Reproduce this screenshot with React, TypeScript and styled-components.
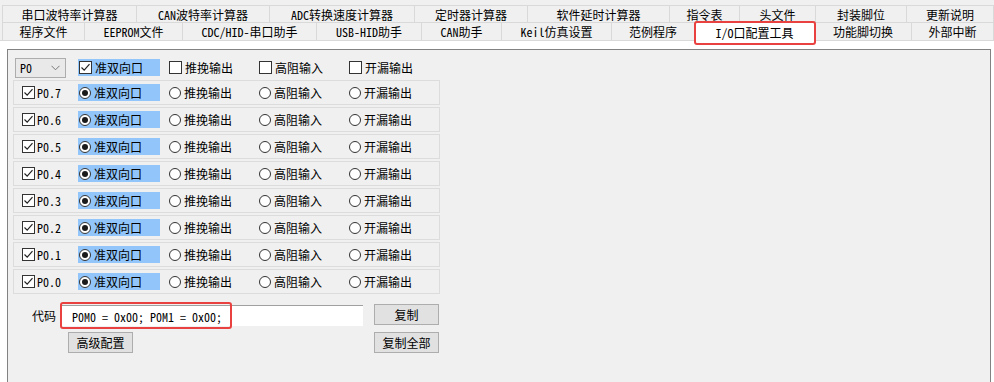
import React from 'react';
import styled, { createGlobalStyle } from 'styled-components';

const FONT = `"Noto Sans Mono CJK SC", "Noto Sans CJK SC", "Liberation Mono", monospace`;

const GlobalStyle = createGlobalStyle`
  html, body {
    margin: 0;
    padding: 0;
    background: #f0f0f0;
  }
  body {
    font-family: ${FONT};
    font-size: 12px;
    color: #000;
  }
`;

interface Tab {
  label: string;
  width: number;
  selected?: boolean;
}

const topTabs: Tab[] = [
  { label: '串口波特率计算器', width: 135 },
  { label: 'CAN波特率计算器', width: 133 },
  { label: 'ADC转换速度计算器', width: 145 },
  { label: '定时器计算器', width: 113 },
  { label: '软件延时计算器', width: 142 },
  { label: '指令表', width: 70 },
  { label: '头文件', width: 76 },
  { label: '封装脚位', width: 91 },
  { label: '更新说明', width: 87 },
];

const bottomTabs: Tab[] = [
  { label: '程序文件', width: 83 },
  { label: 'EEPROM文件', width: 98 },
  { label: 'CDC/HID-串口助手', width: 134 },
  { label: 'USB-HID助手', width: 105 },
  { label: 'CAN助手', width: 80 },
  { label: 'Keil仿真设置', width: 110 },
  { label: '范例程序', width: 83 },
  { label: 'I/O口配置工具', width: 120, selected: true },
  { label: '功能脚切换', width: 97 },
  { label: '外部中断', width: 82 },
];

const modes = ['准双向口', '推挽输出', '高阻输入', '开漏输出'];
const pins = ['P0.7', 'P0.6', 'P0.5', 'P0.4', 'P0.3', 'P0.2', 'P0.1', 'P0.0'];

const Window = styled.div`
  width: 994px;
  height: 382px;
  display: flex;
  flex-direction: column;
  overflow: hidden;
`;

const TabStrip = styled.div`
  padding: 5px 0 0 2px;
  display: flex;
  flex-direction: column;
`;

const TabRow = styled.div<{ $h: number }>`
  display: flex;
  height: ${p => p.$h}px;
`;

const TabItem = styled.div<{ $w: number; $selected?: boolean }>`
  position: relative;
  box-sizing: border-box;
  width: ${p => p.$w}px;
  display: flex;
  align-items: center;
  justify-content: center;
  white-space: nowrap;
  border-top: 1px solid #d9d9d9;
  border-right: 1px solid #d9d9d9;
  background: ${p => (p.$selected ? '#ffffff' : '#f0f0f0')};
  ${p =>
    p.$selected &&
    `
    margin-top: -1px;
    margin-bottom: -2px;
    z-index: 2;
    border-top-color: #d0d0d0;
  `}
  &:first-child {
    border-left: 1px solid #d9d9d9;
  }
`;

const Marker = styled.div<{ $l: number; $t: number; $w: number; $h: number }>`
  position: absolute;
  left: ${p => p.$l}px;
  top: ${p => p.$t}px;
  width: ${p => p.$w}px;
  height: ${p => p.$h}px;
  box-sizing: border-box;
  border: 2px solid #e8413f;
  border-radius: 3px;
  pointer-events: none;
  z-index: 3;
`;

const TabPage = styled.div`
  flex: 1;
  display: flex;
  background: #ffffff;
  padding: 8px 3px 0 7px;
  border-top: 1px solid #d9d9d9;
`;

const Panel = styled.div`
  flex: 1;
  background: #f0f0f0;
  border: 1px solid #828282;
  border-bottom: none;
  display: flex;
  flex-direction: column;
`;

const TopRow = styled.div`
  display: flex;
  align-items: center;
  height: 21px;
  margin: 7px 0 0 7px;
`;

const Select = styled.div`
  box-sizing: border-box;
  width: 51px;
  height: 20px;
  border: 1px solid #adadad;
  background: #e9e9e9;
  display: flex;
  align-items: center;
  justify-content: space-between;
  padding: 0 5px 0 4px;
  margin-right: 12px;
  font-weight: 300;
`;

const PinBox = styled.div`
  box-sizing: border-box;
  width: 427px;
  height: 25px;
  margin: 2px 0 0 5px;
  border: 1px solid #dcdcdc;
  display: flex;
  align-items: center;
  padding-left: 8px;
`;

const PinLabel = styled.span`
  width: 41px;
  margin-left: 2px;
  font-weight: 300;
`;

const Option = styled.div`
  width: 90px;
  display: flex;
`;

const OptionBody = styled.div<{ $active?: boolean }>`
  width: 82px;
  height: 17px;
  display: flex;
  align-items: center;
  gap: 3px;
  padding-left: 1px;
  box-sizing: border-box;
  background: ${p => (p.$active ? '#92c6fb' : 'transparent')};
`;

const Box = styled.span`
  box-sizing: border-box;
  width: 13px;
  height: 13px;
  border: 1px solid #333;
  background: #fff;
  display: inline-flex;
  align-items: center;
  justify-content: center;
  flex-shrink: 0;
`;

const Radio = styled.span<{ $on?: boolean }>`
  box-sizing: border-box;
  width: 12px;
  height: 12px;
  border: 1px solid #333;
  border-radius: 50%;
  background: #fff;
  display: inline-flex;
  align-items: center;
  justify-content: center;
  flex-shrink: 0;
  &::after {
    content: '';
    width: 6px;
    height: 6px;
    border-radius: 50%;
    background: ${p => (p.$on ? '#1a1a1a' : 'transparent')};
  }
`;

const CodeRow = styled.div`
  display: flex;
  align-items: flex-start;
  margin: 10px 0 0 24px;
`;

const CodeLabel = styled.span`
  width: 24px;
  line-height: 21px;
  margin-top: 1px;
`;

const CodeInput = styled.div`
  position: relative;
  box-sizing: border-box;
  width: 301px;
  height: 21px;
  margin: 1px 0 0 6px;
  background: #fff;
  border-top: 1px solid #a0a0a0;
  display: flex;
  align-items: center;
  padding-left: 10px;
  white-space: pre;
  font-weight: 300;
`;

const ButtonRow = styled.div`
  display: flex;
  margin: 6px 0 0 60px;
`;

const Button = styled.div<{ $ml: number }>`
  box-sizing: border-box;
  width: 65px;
  height: 21px;
  margin-left: ${p => p.$ml}px;
  border: 1px solid #adadad;
  background: #e1e1e1;
  display: flex;
  align-items: center;
  justify-content: center;
`;

const Check = () => (
  <svg width="11" height="11" viewBox="0 0 11 11">
    <path d="M1.5 5.5 L4.2 8.2 L9.5 2.2" fill="none" stroke="#222" strokeWidth="1.2" />
  </svg>
);

const Chevron = () => (
  <svg width="9" height="6" viewBox="0 0 9 6">
    <path d="M0.5 0.8 L4.5 4.8 L8.5 0.8" fill="none" stroke="#777" strokeWidth="1" />
  </svg>
);

const TabRowView: React.FC<{ tabs: Tab[]; h: number }> = ({ tabs, h }) => (
  <TabRow $h={h}>
    {tabs.map(t => (
      <TabItem key={t.label} $w={t.width} $selected={t.selected}>
        {t.label}
        {t.selected && <Marker $l={-1} $t={-1} $w={122} $h={24} />}
      </TabItem>
    ))}
  </TabRow>
);

export default function App() {
  return (
    <>
      <GlobalStyle />
      <Window>
        <TabStrip>
          <TabRowView tabs={topTabs} h={17} />
          <TabRowView tabs={bottomTabs} h={18} />
        </TabStrip>
        <TabPage>
          <Panel>
            <TopRow>
              <Select>
                <span>P0</span>
                <Chevron />
              </Select>
              {modes.map((m, i) => (
                <Option key={m}>
                  <OptionBody $active={i === 0}>
                    <Box>{i === 0 && <Check />}</Box>
                    <span>{m}</span>
                  </OptionBody>
                </Option>
              ))}
            </TopRow>

            {pins.map(pin => (
              <PinBox key={pin}>
                <Box>
                  <Check />
                </Box>
                <PinLabel>{pin}</PinLabel>
                {modes.map((m, i) => (
                  <Option key={m}>
                    <OptionBody $active={i === 0}>
                      <Radio $on={i === 0} />
                      <span>{m}</span>
                    </OptionBody>
                  </Option>
                ))}
              </PinBox>
            ))}

            <CodeRow>
              <CodeLabel>代码</CodeLabel>
              <CodeInput>
                P0M0 = 0x00; P0M1 = 0x00;
                <Marker $l={-2} $t={-4} $w={172} $h={27} />
              </CodeInput>
              <Button $ml={11}>复制</Button>
            </CodeRow>
            <ButtonRow>
              <Button $ml={0}>高级配置</Button>
              <Button $ml={241}>复制全部</Button>
            </ButtonRow>
          </Panel>
        </TabPage>
      </Window>
    </>
  );
}
